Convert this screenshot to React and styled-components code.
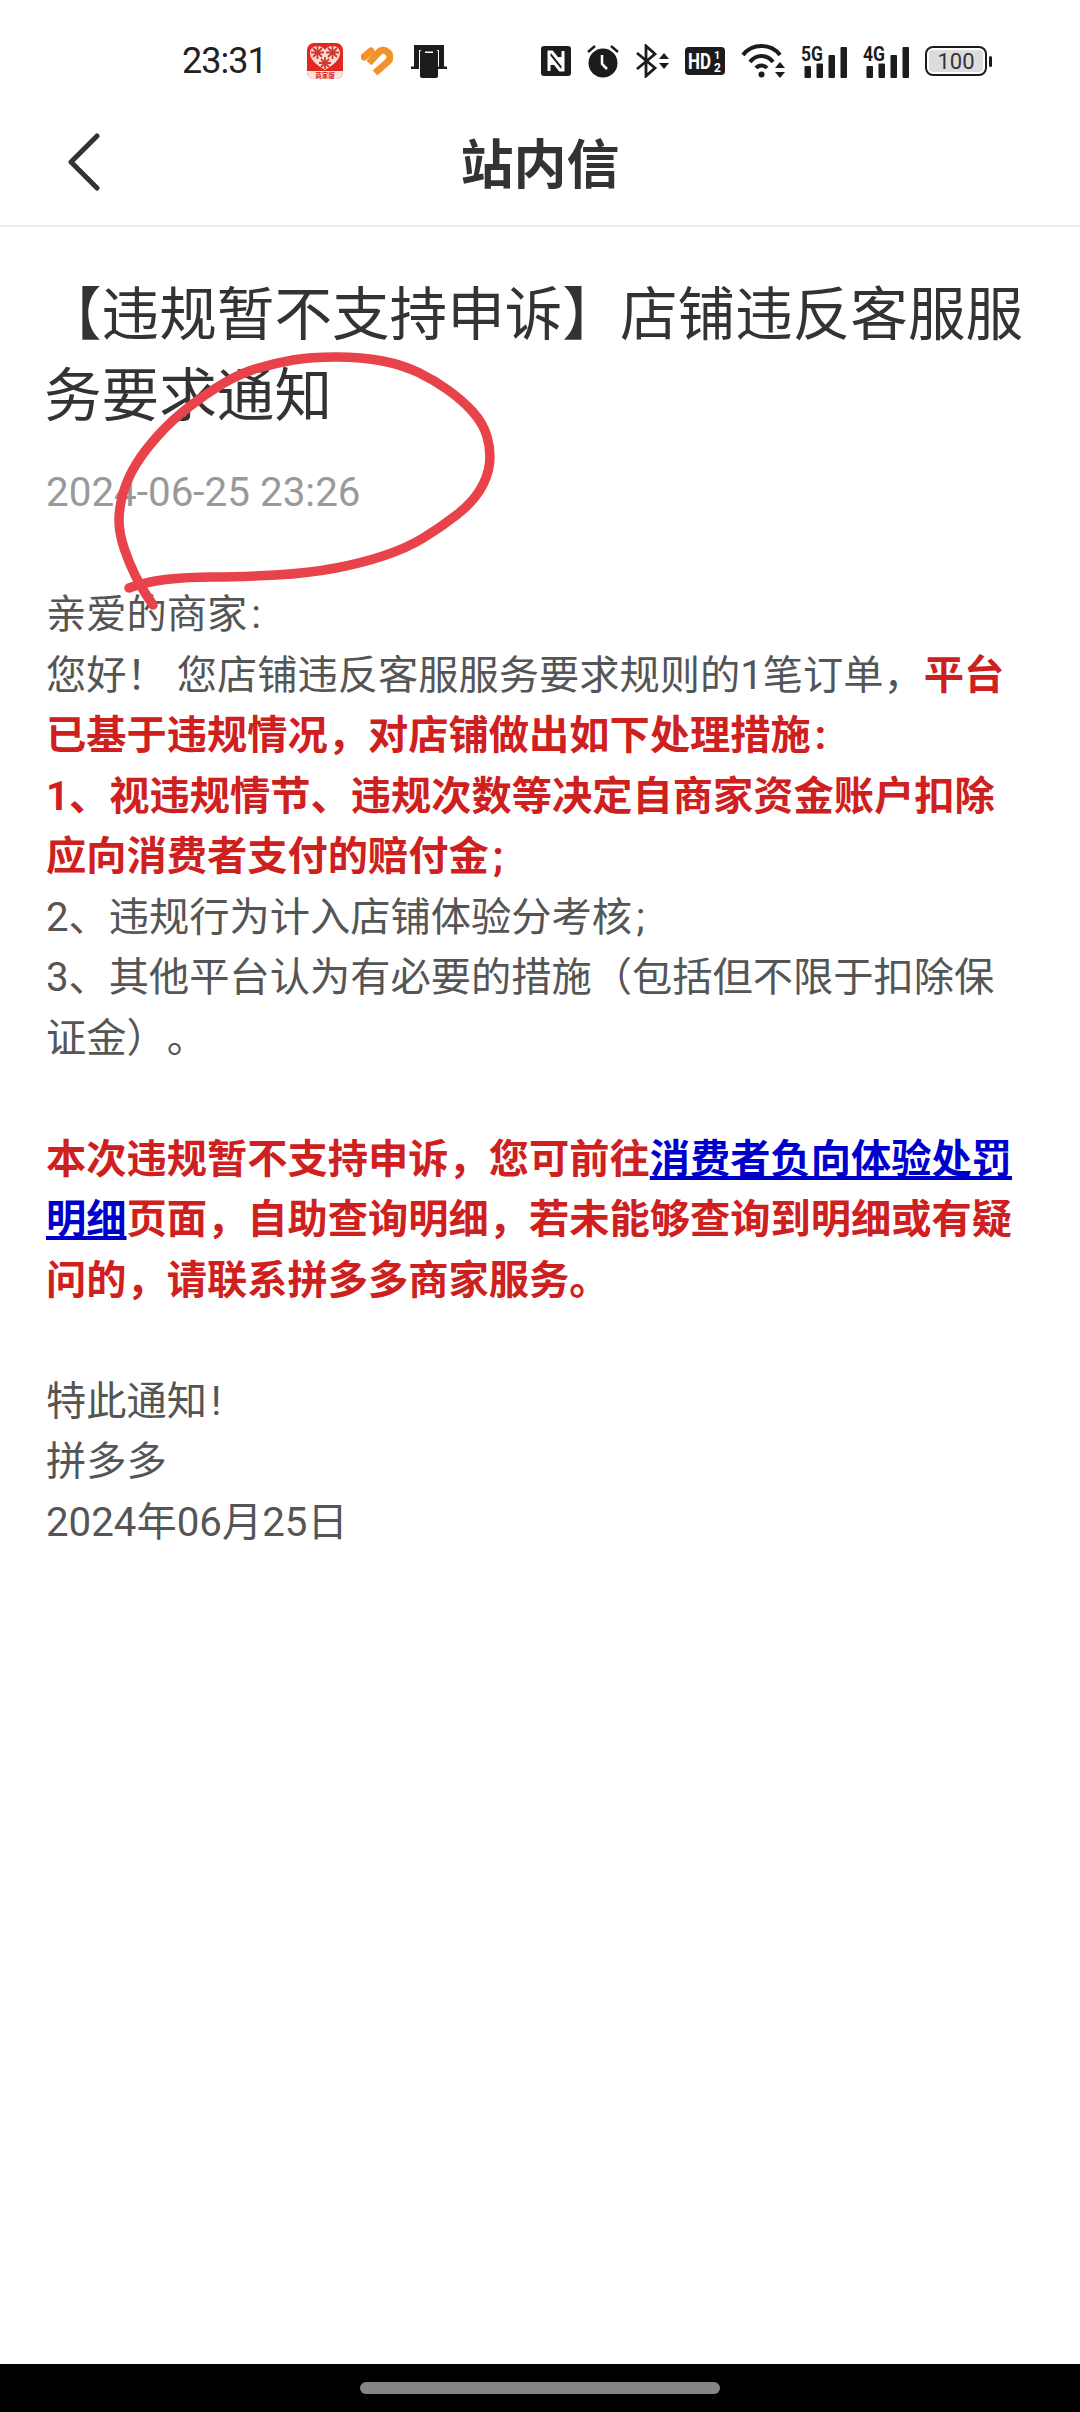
import React from "react";
import styled, { createGlobalStyle } from "styled-components";

const GlobalStyle = createGlobalStyle`
  html, body {
    margin: 0;
    padding: 0;
    background: #fff;
  }
`;

const Page = styled.div`
  position: relative;
  width: 1080px;
  height: 2412px;
  display: flex;
  flex-direction: column;
  overflow: hidden;
  background: #fff;
  font-family: Roboto, "Noto Sans CJK SC", sans-serif;
  text-spacing-trim: space-all;
`;

const StatusBar = styled.div`
  height: 72px;
  padding: 25px 0 0 182px;
  display: flex;
  align-items: center;
`;

const Clock = styled.span`
  width: 125px;
  font-size: 36px;
  letter-spacing: -1px;
  color: #222;
`;

const NoticeIcons = styled.div`
  width: 234px;
  display: flex;
  align-items: center;
  gap: 18px;
`;

const SystemIcons = styled.div`
  display: flex;
  align-items: center;
  gap: 16px;
`;

const NavBar = styled.header`
  position: relative;
  height: 130px;
  display: flex;
  align-items: center;
  justify-content: center;
  border-bottom: 2px solid #eee;
  box-sizing: border-box;
`;

const BackIcon = styled.svg`
  position: absolute;
  left: 66px;
  top: 36px;
`;

const NavTitle = styled.h1`
  margin: 0;
  font-size: 53px;
  font-weight: 700;
  color: #333;
`;

const Article = styled.main`
  flex: 1;
  padding: 48px 46px 0;
`;

const Title = styled.h2`
  margin: 0;
  margin-left: -2px;
  font-size: 57.6px;
  line-height: 81px;
  font-weight: 400;
  color: #333;
`;

const DateLine = styled.div`
  margin-top: 26px;
  font-size: 40.4px;
  line-height: 60px;
  color: #999;
`;

const Body = styled.div`
  margin-top: 62px;
  font-size: 40.25px;
  line-height: 60.5px;
  color: #555;
`;

const Strong = styled.strong`
  font-weight: 700;
  color: #cf2020;
`;

const BlueLink = styled.a`
  font-weight: 700;
  color: #0000cc;
  text-decoration: underline;
`;

// the source uses half-width marks with a little more air before them
const Mark = styled.span`
  margin-left: 4px;
`;

const NavHintBar = styled.div`
  height: 48px;
  display: flex;
  align-items: center;
  justify-content: center;
  background: #000;
`;

const Pill = styled.div`
  width: 360px;
  height: 12px;
  border-radius: 6px;
  background: #858585;
`;

const Scribble = styled.svg`
  position: absolute;
  left: 0;
  top: 0;
  pointer-events: none;
`;

const scribblePoints = [
  [129, 588], [145, 582], [186, 577], [241, 577], [310, 573], [362, 563],
  [407, 548], [441, 527], [472, 503], [488, 477], [491, 450], [483, 423],
  [462, 400], [434, 380], [403, 365], [362, 357], [310, 357], [276, 363],
  [241, 373], [207, 393], [172, 420], [145, 450], [128, 477], [119, 507],
  [119, 533], [129, 563], [141, 587], [153, 605],
];

// smooth line through the midpoints of the traced points
const smoothPath = (pts) => {
  let d = `M${pts[0][0]} ${pts[0][1]}`;
  for (let i = 1; i < pts.length - 1; i++) {
    const mx = (pts[i][0] + pts[i + 1][0]) / 2;
    const my = (pts[i][1] + pts[i + 1][1]) / 2;
    d += ` Q${pts[i][0]} ${pts[i][1]} ${mx} ${my}`;
  }
  const last = pts[pts.length - 1];
  return `${d} L${last[0]} ${last[1]}`;
};

const PddIcon = () => (
  <svg width="36" height="36" viewBox="0 0 36 36">
    <rect width="36" height="36" rx="7" fill="#e3261f" />
    <path d="M0 28h36v1a7 7 0 0 1-7 7H7a7 7 0 0 1-7-7z" fill="#fbe6dc" />
    <path d="M18 27C9 22 3 16 3 10c0-4 3-7 7.500-7 3 0 5.500 1 7.500 4 2-3 4.500-4 7.500-4C30 3 33 6 33 10c0 6-6 12-15 17z" fill="#f9dcd4" />
    <g stroke="#cf3a30" strokeWidth="1.800" fill="none">
      <path d="M10.500 3v13M4 9.500h13M6 5l9 9M15 5l-9 9" />
      <path d="M25.500 3v13M19 9.500h13M21 5l9 9M30 5l-9 9" />
      <path d="M18 14v12M12 20h12M14 16l8 8M22 16l-8 8" />
    </g>
    <text x="18" y="34.500" textAnchor="middle" fontSize="6.500" fontWeight="700" fill="#d9241d" fontFamily="Noto Sans CJK SC">商家版</text>
  </svg>
);

const OrangeHeart = () => (
  <svg width="32" height="30" viewBox="0 0 32 30" fill="none" stroke="#f3922a" strokeWidth="7">
    <path d="M3 11 L10 5" strokeLinecap="round" />
    <path d="M8 17 L17 7 C20 3.500 24 3.500 27 6.500 C30 9.500 29.500 13 27 15.500 L14 27" />
  </svg>
);

const ScreenCastIcon = () => (
  <svg width="36" height="34" viewBox="0 0 36 34">
    <path d="M3 1h30v22h-5V6H8v17H3z" fill="#1c1c1c" />
    <path d="M0 22.500h8v2.500H0zM27 22.500h9V25h-9z" fill="#1c1c1c" />
    <rect x="9" y="6" width="18" height="28" rx="2" fill="#1c1c1c" />
    <rect x="14" y="7.500" width="8" height="1.500" fill="#fff" />
  </svg>
);

const NfcIcon = () => (
  <svg width="30" height="30" viewBox="0 0 30 30">
    <rect width="30" height="30" rx="3" fill="#1c1c1c" />
    <path d="M8 25V6h3l8 10v-5M22 5v19h-3l-8-10v5" fill="none" stroke="#fff" strokeWidth="3" />
  </svg>
);

const AlarmIcon = () => (
  <svg width="32" height="34" viewBox="0 0 32 34">
    <circle cx="16" cy="19" r="14.500" fill="#1c1c1c" />
    <path d="M15 11v9l5 5" fill="none" stroke="#fff" strokeWidth="2.500" />
    <path d="M1 8l7-6M31 8l-7-6" stroke="#1c1c1c" strokeWidth="2.500" />
  </svg>
);

const Updown = ({ x, y }) => (
  <g fill="#1c1c1c" transform={`translate(${x} ${y})`}>
    <path d="M0 6 L5 0 L10 6z" />
    <path d="M0 10 L5 16 L10 10z" />
  </g>
);

const BluetoothIcon = () => (
  <svg width="34" height="34" viewBox="0 0 34 34">
    <path d="M2 9l18 15-9 8V2l9 8L2 25" fill="none" stroke="#1c1c1c" strokeWidth="2.800" />
    <Updown x={24} y={9} />
  </svg>
);

const HdIcon = () => (
  <svg width="40" height="28" viewBox="0 0 40 28">
    <rect width="40" height="28" rx="4" fill="#1c1c1c" />
    <text x="3" y="22" fontSize="22" fontWeight="700" fill="#fff" fontFamily="Roboto" textLength="23" lengthAdjust="spacingAndGlyphs">HD</text>
    <text x="29" y="12" fontSize="11" fontWeight="700" fill="#fff" fontFamily="Roboto">1</text>
    <text x="29" y="25" fontSize="12" fontWeight="700" fill="#fff" fontFamily="Roboto">2</text>
  </svg>
);

const WifiIcon = () => (
  <svg width="44" height="34" viewBox="0 0 44 34" fill="none" stroke="#1c1c1c" strokeWidth="4">
    <path d="M2 11C11 -1 30 -1 39 11" />
    <path d="M9 18C15 10 26 10 32 18" />
    <path d="M15 24C18 20.500 23 20.500 26 24" />
    <circle cx="20.500" cy="30.500" r="3" fill="#1c1c1c" stroke="none" />
    <g stroke="none"><Updown x={34} y={18} /></g>
  </svg>
);

const SignalIcon = ({ label }) => (
  <svg width="46" height="33" viewBox="0 0 46 33" fill="#1c1c1c">
    <text x="0" y="16" fontSize="21" fontWeight="700" fontFamily="Roboto" textLength="22" lengthAdjust="spacingAndGlyphs">{label}</text>
    <rect x="3.500" y="21" width="6.500" height="12" rx="1" />
    <rect x="15.500" y="18.500" width="6.500" height="14.500" rx="1" />
    <rect x="27.500" y="10" width="6.500" height="23" rx="1" />
    <rect x="39.500" y="2" width="6.500" height="31" rx="1" />
  </svg>
);

const BatteryIcon = () => (
  <svg width="68" height="30" viewBox="0 0 68 30">
    <rect x="1" y="1" width="60" height="28" rx="7" fill="#fff" stroke="#1c1c1c" strokeWidth="2" />
    <rect x="4" y="4" width="54" height="22" rx="4" fill="#dcdcdc" />
    <rect x="64" y="10" width="3" height="11" rx="1.500" fill="#1c1c1c" />
    <text x="31" y="23" textAnchor="middle" fontSize="22" fill="#333" fontFamily="Roboto">100</text>
  </svg>
);

const App = () => {
  return (
    <Page>
      <GlobalStyle />
      <StatusBar>
        <Clock>23:31</Clock>
        <NoticeIcons>
          <PddIcon />
          <OrangeHeart />
          <ScreenCastIcon />
        </NoticeIcons>
        <SystemIcons>
          <NfcIcon />
          <AlarmIcon />
          <BluetoothIcon />
          <HdIcon />
          <WifiIcon />
          <SignalIcon label="5G" />
          <SignalIcon label="4G" />
          <BatteryIcon />
        </SystemIcons>
      </StatusBar>
      <NavBar>
        <BackIcon width="36" height="58" viewBox="0 0 36 58" fill="none">
          <path d="M31 3 L5 29 L31 55" stroke="#333" strokeWidth="5" strokeLinecap="round" strokeLinejoin="round" />
        </BackIcon>
        <NavTitle>站内信</NavTitle>
      </NavBar>
      <Article>
        <Title>【违规暂不支持申诉】店铺违反客服服务要求通知</Title>
        <DateLine>2024-06-25 23:26</DateLine>
        <Body>
          亲爱的商家<Mark>:</Mark>
          <br />
          您好！ 您店铺违反客服服务要求规则的1笔订单，
          <Strong>
            平台已基于违规情况，对店铺做出如下处理措施<Mark>:</Mark>
            <br />
            1、视违规情节、违规次数等决定自商家资金账户扣除应向消费者支付的赔付金<Mark>;</Mark>
          </Strong>
          <br />
          2、违规行为计入店铺体验分考核<Mark>;</Mark>
          <br />
          3、其他平台认为有必要的措施（包括但不限于扣除保证金）。
          <br />
          <br />
          <Strong>本次违规暂不支持申诉，您可前往</Strong>
          <BlueLink>消费者负向体验处罚明细</BlueLink>
          <Strong>页面，自助查询明细，若未能够查询到明细或有疑问的，请联系拼多多商家服务。</Strong>
          <br />
          <br />
          特此通知<Mark>!</Mark>
          <br />
          拼多多
          <br />
          2024年06月25日
        </Body>
      </Article>
      <NavHintBar>
        <Pill />
      </NavHintBar>
      <Scribble width="1080" height="700" viewBox="0 0 1080 700" fill="none">
        <path d={smoothPath(scribblePoints)} stroke="#e8434a" strokeWidth="9.500" strokeLinecap="round" strokeLinejoin="round" />
      </Scribble>
    </Page>
  );
};

export default App;
